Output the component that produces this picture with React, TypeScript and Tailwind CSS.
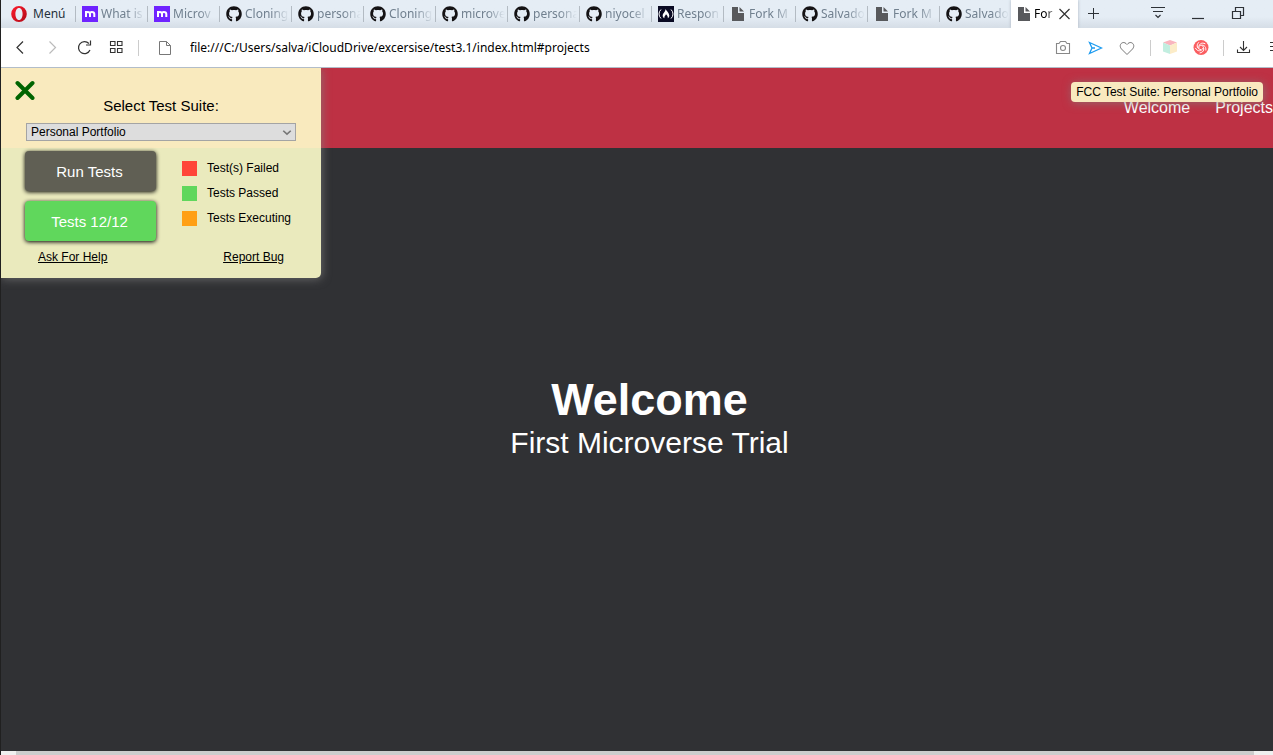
import React from "react";
import { FaGithub } from "react-icons/fa";

type TabKind = "microverse" | "github" | "fcc" | "file";

const tabs: { kind: TabKind; title: string }[] = [
  { kind: "microverse", title: "What is" },
  { kind: "microverse", title: "Microv" },
  { kind: "github", title: "Cloning" },
  { kind: "github", title: "persona" },
  { kind: "github", title: "Cloning" },
  { kind: "github", title: "microve" },
  { kind: "github", title: "persona" },
  { kind: "github", title: "niyocel" },
  { kind: "fcc", title: "Respon" },
  { kind: "file", title: "Fork M" },
  { kind: "github", title: "Salvado" },
  { kind: "file", title: "Fork M" },
  { kind: "github", title: "Salvado" },
];

const legend = [
  { color: "bg-[#ff4538]", label: "Test(s) Failed" },
  { color: "bg-[#60d75c]", label: "Tests Passed" },
  { color: "bg-[#ffa015]", label: "Tests Executing" },
];

function Favicon({ kind }: { kind: TabKind }) {
  if (kind === "github") return <FaGithub className="size-4 shrink-0 text-[#141214]" />;
  if (kind === "microverse")
    return (
      <svg viewBox="0 0 16 16" className="size-4 shrink-0">
        <rect width="16" height="16" fill="#6f23ff" />
        <path d="M4 11V5M4 7.600Q4 6 5.800 6Q8 6 8 8V11M8 7.600Q8 6 9.800 6Q12.300 6 12.300 8V11" fill="none" stroke="#fff" strokeWidth="2" />
      </svg>
    );
  if (kind === "fcc")
    return (
      <svg viewBox="0 0 16 16" className="size-4 shrink-0">
        <rect width="16" height="16" fill="#0a0a23" />
        <path d="M3 3.500Q1 5.500 1 8T3 12.500M13 3.500Q15 5.500 15 8T13 12.500" fill="none" stroke="#fff" strokeWidth="1" />
        <path d="M7.500 3C8.500 5 11.300 7 11.300 9.500C11.300 10.800 10.600 11.800 9.800 12.300C10 10.800 9.500 9.500 8 8.300C7.500 9.500 6 10.500 6.400 12.300C5.300 11.800 4.700 10.800 4.700 9.500C4.700 7 7.500 6 7.500 3Z" fill="#fff" />
      </svg>
    );
  return (
    <svg viewBox="0 0 16 16" className="size-4 shrink-0" fill="#58595c">
      <path d="M2 1H8V7H14V15H2Z" />
      <path d="M9.500 1L14 5.500H9.500Z" />
    </svg>
  );
}

function Stroke({ d, className, width = 1 }: { d: string; className: string; width?: number }) {
  return (
    <svg viewBox="0 0 16 16" className={className} fill="none" stroke="currentColor" strokeWidth={width}>
      <path d={d} />
    </svg>
  );
}

function TabBar() {
  return (
    <div className="flex h-7 shrink-0 items-stretch overflow-hidden bg-linear-to-b from-[#e5edf5] from-60% to-[#d5dde6] text-xs">
      <button className="flex w-[74px] shrink-0 items-center gap-1.5 pl-2.5 text-[#25303b]">
        <svg viewBox="0 0 16 16" className="size-4">
          <defs>
            <linearGradient id="opera" x1="0" y1="0" x2="1" y2="1">
              <stop offset="0" stopColor="#ff1b2d" />
              <stop offset="1" stopColor="#b00b17" />
            </linearGradient>
          </defs>
          <path fillRule="evenodd" fill="url(#opera)" d="M8 0A7.800 8 0 1 0 8 16A7.800 8 0 1 0 8 0ZM8 2C10.200 2 11.600 4.700 11.600 8S10.200 14 8 14S4.400 11.300 4.400 8S5.800 2 8 2Z" />
        </svg>
        Menú
      </button>
      <div role="tablist" className="flex shrink-0">
        {tabs.map((tab, i) => (
          <button key={i} role="tab" className="flex w-18 items-center text-[#71808f]">
            <span className="mr-1.5 h-4 w-px shrink-0 bg-[#b3bbc3]" />
            <Favicon kind={tab.kind} />
            <span className="ml-[3px] w-[46px] whitespace-nowrap text-left [mask-image:linear-gradient(to_right,black_26px,transparent_44px)]">
              {tab.title}
            </span>
          </button>
        ))}
        <div className="flex w-[67px] items-center bg-white pl-[5px] shadow-[0_0_3px_#aab4bf]">
          <button role="tab" aria-selected="true" className="flex items-center">
            <Favicon kind="file" />
            <span className="ml-0.5 w-5 whitespace-nowrap text-left [mask-image:linear-gradient(to_right,black_60%,transparent_120%)]">
              For
            </span>
          </button>
          <button aria-label="Close tab" className="ml-0.5">
            <Stroke d="M3.500 3L13.500 13M13.500 3L3.500 13" className="size-4 text-[#333]" width={1.2} />
          </button>
        </div>
        <button aria-label="New tab" className="ml-2">
          <Stroke d="M7.500 2V13M2 7.500H13" className="size-4 text-[#2d3136]" />
        </button>
      </div>
      <div className="-mr-[25px] ml-auto flex shrink-0 text-[#2d3136]">
        <button aria-label="Tab menu" className="grid w-10 place-items-center">
          <Stroke d="M1 1.500H15M3 5.500H13M5.500 9L8 11.500L10.500 9" className="size-4" width={1.2} />
        </button>
        <button aria-label="Minimize" className="grid w-10 place-items-center">
          <Stroke d="M2 12.500H14" className="size-4" width={1.2} />
        </button>
        <button aria-label="Restore" className="grid w-10 place-items-center">
          <Stroke d="M2.500 5.500H10.500V12.500H2.500ZM5.500 5V1.500H13.500V9.500H11" className="size-4" width={1.2} />
        </button>
        <button aria-label="Close window" className="grid w-10 place-items-center">
          <Stroke d="M3 3L13 13M13 3L3 13" className="size-4" />
        </button>
      </div>
    </div>
  );
}

function Toolbar() {
  return (
    <div className="flex h-10 shrink-0 items-center overflow-hidden border-b border-[#b2bdc9] bg-white text-[#333]">
      <div className="flex shrink-0 items-center gap-4 pl-[11px]">
        <button aria-label="Back">
          <Stroke d="M11 1.500L5 7.500L11 13.500" className="size-4" width={1.2} />
        </button>
        <button aria-label="Forward">
          <Stroke d="M5.500 1.500L11.500 7.500L5.500 13.500" className="size-4 text-[#bbb]" width={1.2} />
        </button>
        <button aria-label="Reload">
          <Stroke d="M14 10A6 6 0 1 1 12.900 3.500M14.500 .5V5H10" className="size-4" width={1.2} />
        </button>
        <button aria-label="Speed dial">
          <Stroke d="M2.500 1.500H7V5.500H2.500ZM9.500 1.500H14V5.500H9.500ZM2.500 8.500H7V12.500H2.500ZM9.500 8.500H14V12.500H9.500Z" className="size-4" width={1.1} />
        </button>
      </div>
      <span className="ml-3.5 h-4 w-px bg-[#ccc]" />
      <Stroke d="M2.500 1.500H9.500L13.500 5.500V14.500H2.500ZM9.500 1.500V5.500H13.500" className="ml-[18px] size-4 shrink-0 text-[#777]" />
      <input
        aria-label="Address"
        defaultValue="file:///C:/Users/salva/iCloudDrive/excersise/test3.1/index.html#projects"
        className="ml-[17px] min-w-0 grow bg-transparent text-xs text-black outline-none"
      />
      <div className="-mr-2.5 flex shrink-0 items-center gap-4">
        <button aria-label="Snapshot">
          <svg viewBox="0 0 16 16" className="size-4 text-[#888]" fill="none" stroke="currentColor" strokeWidth="1.1">
            <path d="M1.500 3.500H4L5.500 1.500H10.500L12 3.500H14.500V13.500H1.500Z" />
            <circle cx="8" cy="8" r="2.500" />
          </svg>
        </button>
        <button aria-label="My Flow">
          <Stroke d="M2.500 2.500L14.500 8L2.500 13.500L5 8ZM5 8H8" className="size-4 text-[#1c9bf0]" width={1.3} />
        </button>
        <button aria-label="Bookmark">
          <Stroke d="M8 14.500L2.500 9C-1 5 3.500 .5 7 3.500L8 4.500L9 3.500C12.500 .5 17 5 13.500 9Z" className="size-4 text-[#777]" />
        </button>
        <span className="-mx-px h-4 w-px bg-[#ccc]" />
        <button aria-label="Cube extension" className="-ml-1">
          <svg viewBox="0 0 16 16" className="size-4">
            <path d="M8 0L15 2.500L8 5.500L1 2.500Z" fill="#f9b5be" />
            <path d="M1 2.500L8 5.500V14L1 11.500Z" fill="#c2eee0" />
            <path d="M15 2.500L8 5.500V14L15 11.500Z" fill="#fcecc8" />
          </svg>
        </button>
        <button aria-label="Swirl extension" className="-mx-px">
          <svg viewBox="0 0 16 16" className="size-4">
            <circle cx="8" cy="7.500" r="7.500" fill="#fa5d60" />
            <g fill="none" stroke="#fff" strokeWidth=".9">
              {[0, 72, 144, 216, 288].map((angle) => (
                <path key={angle} d="M6.500 5.800C10 4 13.500 6 12.800 10.500" transform={`rotate(${angle} 8 7.5)`} />
              ))}
            </g>
          </svg>
        </button>
        <span className="-mx-px h-4 w-px bg-[#ccc]" />
        <button aria-label="Downloads" className="-ml-1">
          <Stroke d="M8.500 1V10M5 7L8.500 10.500L12 7M2.500 9.500V12.500H14.500V9.500" className="size-4" width={1.1} />
        </button>
        <button aria-label="Easy setup">
          <Stroke d="M3 2.500H14M3 6.500H14M3 10.500H14" className="size-4" />
        </button>
      </div>
    </div>
  );
}

function TestPanel() {
  return (
    <section className="absolute top-0 left-0 flex w-80 flex-col rounded-br-[5px] bg-[rgba(255,255,204,0.9)] px-6 pt-3 pb-[13px] text-xs text-black shadow-[1px_1px_10px_rgba(128,128,128,0.7)]">
      <button aria-label="Close test panel" className="-ml-2.5 size-5">
        <svg viewBox="0 0 20 20" className="size-5" stroke="#006400" strokeWidth="4" strokeLinecap="round">
          <path d="M2.500 3L17.500 18M17.500 3L2.500 18" />
        </svg>
      </button>
      <label htmlFor="suite" className="-mt-1 h-5 text-center text-[15px] leading-5">
        Select Test Suite:
      </label>
      <div className="relative mx-px mt-[7px] h-[18px]">
        <select id="suite" className="block size-full appearance-none border border-[#a4a4a4] bg-[#ddd] px-1 leading-4">
          <option>Personal Portfolio</option>
        </select>
        <Stroke d="M3 5L8 9.500L13 5" className="pointer-events-none absolute top-1 right-[3px] size-3 text-[#777]" width={2.2} />
      </div>
      <div className="mt-2.5 flex gap-[26px]">
        <div className="flex w-[131px] flex-col gap-2.5 text-[15px] leading-5 text-white">
          <button className="h-10 rounded bg-[#605f54] pt-0.5 pr-0.5 shadow-[0_1px_4px_#000]">Run Tests</button>
          <button className="h-10 rounded bg-[#60d75c] pt-0.5 pr-0.5 shadow-[0_1px_4px_#000]">Tests 12/12</button>
        </div>
        <ul className="flex flex-col gap-2.5 pt-2.5">
          {legend.map((item) => (
            <li key={item.label} className="flex h-[15px] items-start gap-2.5">
              <span className={`size-[15px] ${item.color}`} />
              <span className="leading-[14px]">{item.label}</span>
            </li>
          ))}
        </ul>
      </div>
      <div className="mt-2 flex h-4 justify-between px-[13px] leading-4 underline">
        <a href="#help">Ask For Help</a>
        <a href="#bug">Report Bug</a>
      </div>
    </section>
  );
}

export default function App() {
  return (
    <div className="flex h-screen flex-col overflow-hidden border-l border-[#202020] font-['Noto_Sans',sans-serif]">
      <TabBar />
      <Toolbar />
      <main className="relative flex min-h-0 grow flex-col overflow-hidden bg-[#303134] font-['Liberation_Sans',Arial,sans-serif] text-white">
        <nav className="flex h-20 shrink-0 items-center justify-end gap-[25px] bg-[#be3144]">
          <a href="#welcome">Welcome</a>
          <a href="#projects">Projects</a>
        </nav>
        <section id="welcome" className="flex grow flex-col items-center justify-center pb-16 pl-[25px]">
          <h1 className="text-[45px] leading-[50px] font-bold">Welcome</h1>
          <p className="text-[30px] leading-9">First Microverse Trial</p>
        </section>
        <TestPanel />
        <div className="absolute top-3.5 right-2.5 rounded bg-[#f9e9bf] px-[5px] text-xs leading-5 text-black shadow-[1px_1px_10px_rgba(128,128,128,0.7)]">
          FCC Test Suite: Personal Portfolio
        </div>
      </main>
      <div className="h-1 shrink-0 bg-[#f0f0f0] pr-[19px] pl-[15px]">
        <div className="h-full bg-[#cdcdcd]" />
      </div>
    </div>
  );
}
